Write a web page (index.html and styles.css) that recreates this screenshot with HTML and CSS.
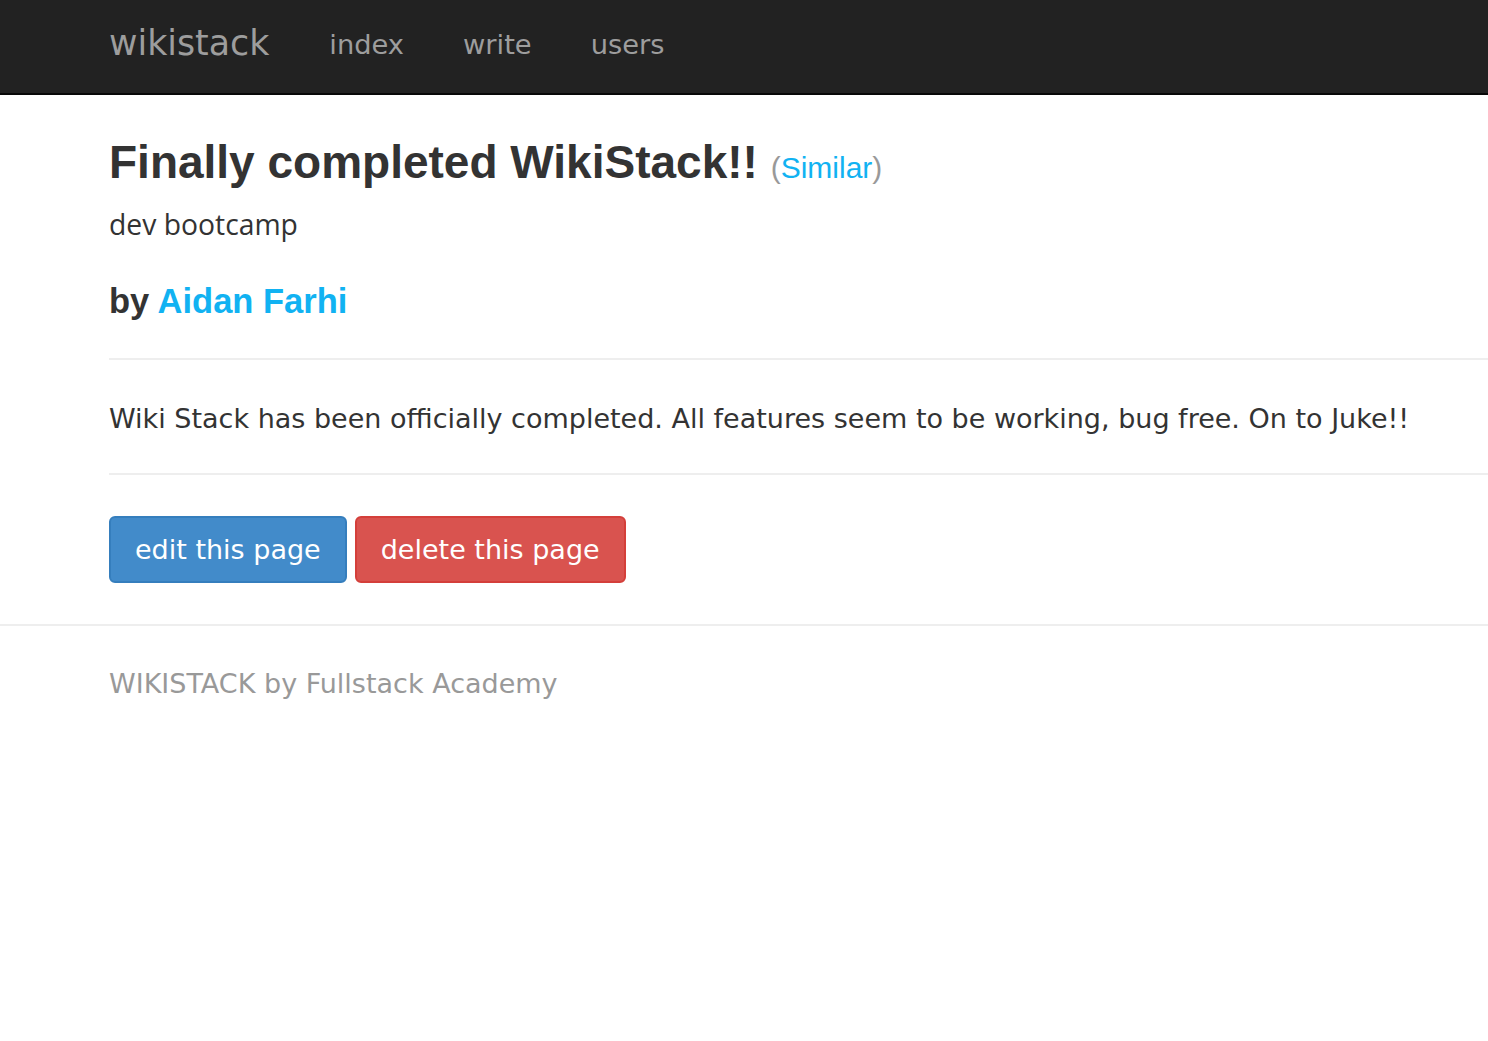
FILE: index.html
```html
<!DOCTYPE html>
<html>
<head>
<meta charset="utf-8">
<title>wikistack</title>
<link rel="stylesheet" href="styles.css">
</head>
<body>
<nav class="navbar">
  <div class="nav-inner">
    <a class="brand" href="#">wikistack</a>
    <ul class="nav-links">
      <li><a href="#">index</a></li>
      <li><a href="#">write</a></li>
      <li><a href="#">users</a></li>
    </ul>
  </div>
</nav>
<main class="content">
  <h1 class="page-title">Finally completed WikiStack!! <small class="similar">(<a href="#">Similar</a>)</small></h1>
  <div class="tags">dev bootcamp</div>
  <h2 class="author">by <a href="#">Aidan Farhi</a></h2>
  <hr class="rule">
  <p class="page-body">Wiki Stack has been officially completed. All features seem to be working, bug free. On to Juke!!</p>
  <hr class="rule">
  <div class="actions">
    <a class="btn btn-primary" href="#">edit this page</a>
    <a class="btn btn-danger" href="#">delete this page</a>
  </div>
</main>
<footer class="footer">
  <div class="footer-text">WIKISTACK by Fullstack Academy</div>
</footer>
</body>
</html>
```
FILE: styles.css
```css
html, body {
  margin: 0;
  padding: 0;
  background: #fff;
}
body {
  font-family: "DejaVu Sans", sans-serif;
  color: #333;
}
a { text-decoration: none; }

.navbar {
  background: #222;
  height: 93px;
  border-bottom: 2px solid #080808;
}
.nav-inner {
  display: flex;
  align-items: center;
  height: 100%;
  padding-left: 109px;
}
.brand {
  color: #9d9d9d;
  font-size: 34.8px;
  line-height: 1;
  margin-top: -6px;
  margin-right: 60px;
}
.nav-links {
  display: flex;
  list-style: none;
  margin: -4px 0 0;
  padding: 0;
  gap: 59px;
}
.nav-links a {
  color: #9d9d9d;
  font-size: 27.3px;
  line-height: 1;
}

.content {
  padding-left: 109px;
}
.page-title {
  font-family: "Liberation Sans", Arial, sans-serif;
  font-weight: bold;
  font-size: 46px;
  line-height: 1.1;
  margin: 0;
  padding-top: 42px;
  color: #333;
}
.similar {
  font-weight: normal;
  font-size: 30px;
  color: #999;
}
.similar a, .author a {
  color: #11b2f2;
}
.tags {
  font-family: "Open Sans", sans-serif;
  font-size: 28.3px;
  line-height: 1.4;
  margin-top: 17px;
  color: #333;
}
.author {
  font-family: "Liberation Sans", Arial, sans-serif;
  font-weight: bold;
  font-size: 34.5px;
  line-height: 1.1;
  margin: 39px 0 0;
  color: #333;
}
.rule {
  border: 0;
  border-top: 2px solid #eee;
  margin: 0;
}
.author + .rule { margin-top: 37px; }
.page-body {
  font-size: 27px;
  line-height: 1.4;
  margin: 0;
  padding: 40px 0 35px;
  color: #333;
}
.actions {
  display: flex;
  gap: 8px;
  padding: 41px 0 41px;
}
.btn {
  display: inline-block;
  font-size: 27px;
  line-height: 1;
  color: #fff;
  padding: 18px 24px 18px;
  border-radius: 6px;
  border: 2px solid transparent;
}
.btn-primary {
  background: #428bca;
  border-color: #357ebd;
}
.btn-danger {
  background: #d9534f;
  border-color: #d43f3a;
}
.footer {
  border-top: 2px solid #eee;
  padding: 42px 0 0 109px;
}
.footer-text {
  font-size: 27px;
  color: #999;
  line-height: 1.2;
}
```
